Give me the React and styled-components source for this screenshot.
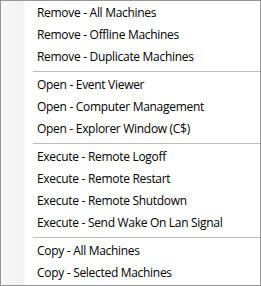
import React from "react";
import styled, { createGlobalStyle } from "styled-components";

const Global = createGlobalStyle`
  html, body { margin: 0; padding: 0; background: #ffffff; }
  #root { width: 261px; height: 286px; }
`;

const Menu = styled.div`
  box-sizing: border-box;
  width: 261px;
  height: 286px;
  border: 1px solid #979797;
  padding: 1px 0 1px 0;
  background: linear-gradient(to right, #f8f8f8 0px, #f1f1f1 23px, #ffffff 24px);
  display: flex;
  flex-direction: column;
  font-family: "Open Sans", "Noto Sans", sans-serif;
  font-size: 12px;
  letter-spacing: -0.3px;
  color: #000;
`;

const Item = styled.div`
  height: 22px;
  line-height: 22px;
  padding-left: 36px;
  white-space: nowrap;
  cursor: default;
`;

const Separator = styled.div`
  height: 6px;
  display: flex;
  align-items: center;
  padding-left: 32px;
  &::after {
    content: "";
    flex: 1;
    height: 1px;
    background: #bcbcbc;
  }
`;

const groups = [
  ["Remove - All Machines", "Remove - Offline Machines", "Remove - Duplicate Machines"],
  ["Open - Event Viewer", "Open - Computer Management", "Open - Explorer Window (C$)"],
  [
    "Execute - Remote Logoff",
    "Execute - Remote Restart",
    "Execute - Remote Shutdown",
    "Execute - Send Wake On Lan Signal",
  ],
  ["Copy - All Machines", "Copy - Selected Machines"],
];

export default function App() {
  return (
    <>
      <Global />
      <Menu>
        {groups.map((g, gi) => (
          <React.Fragment key={gi}>
            {gi > 0 && <Separator />}
            {g.map((label) => (
              <Item key={label}>{label}</Item>
            ))}
          </React.Fragment>
        ))}
      </Menu>
    </>
  );
}
